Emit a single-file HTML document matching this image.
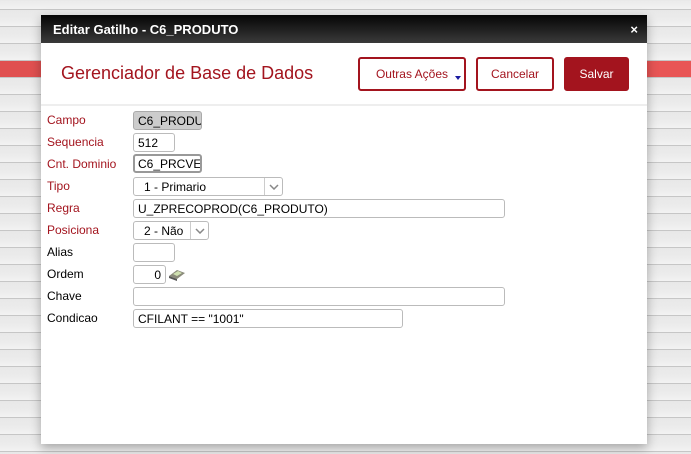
<!DOCTYPE html><html><head><style>
*{box-sizing:border-box;margin:0;padding:0}
body{width:691px;height:454px;overflow:hidden;position:relative;font-family:"Liberation Sans",sans-serif;
background:repeating-linear-gradient(180deg,#ebebeb 0,#f2f2f2 8px,#c6c6c6 8px,#c6c6c6 9px,#e8e8e8 9px,#ebebeb 17px);background-position:0 1px}
.red{position:absolute;left:0;right:0;top:61px;height:16px;background:linear-gradient(90deg,#e05050,#e85555)}
.modal{position:absolute;left:41px;top:15px;width:606px;height:429px;background:#fff;box-shadow:0 4px 10px rgba(0,0,0,.3)}
.hd{height:28px;background:linear-gradient(#050505,#3a3a3a);color:#fff;font-weight:bold;font-size:13px;padding:7px 0 0 12px}
.x{position:absolute;right:9px;top:7px;font-size:13px;color:#fff;font-weight:bold}
.title{position:absolute;left:20px;top:48px;font-size:18px;color:#a3141e}
.btn{position:absolute;top:42px;height:34px;border:2px solid #a3141e;border-radius:3px;color:#a3141e;font-size:12px;text-align:center;line-height:30px;background:#fff}
.sep{position:absolute;left:0;right:0;top:89px;height:2px;background:#eee}
.l{position:absolute;left:6px;font-size:12px}
.r{color:#a3141e}
.i{position:absolute;left:92px;height:19px;border:1px solid #bbb;border-radius:3px;font-size:12px;padding:2px 4px;overflow:hidden;white-space:nowrap;background:#fff}
.ar{position:absolute;top:0;right:0;width:18px;height:100%;border-left:1px solid #ccc}
.ar svg{position:absolute;left:4px;top:6px}
</style></head><body>
<div class="red"></div>
<div class="modal">
<div class="hd">Editar Gatilho - C6_PRODUTO</div><div class="x">×</div>
<div class="title">Gerenciador de Base de Dados</div>
<div class="btn" style="left:317px;width:108px">Outras Ações<span style="position:absolute;right:3px;top:17px;width:0;height:0;border-left:3px solid transparent;border-right:3px solid transparent;border-top:4px solid #1a1aa0"></span></div>
<div class="btn" style="left:435px;width:78px">Cancelar</div>
<div class="btn" style="left:523px;width:65px;background:#a3141e;color:#fff">Salvar</div>
<div class="sep"></div>
<div class="l r" style="top:98px">Campo</div><div class="i" style="top:96px;width:69px;background:#ccc;border-color:#aaa">C6_PRODUTO</div>
<div class="l r" style="top:120px">Sequencia</div><div class="i" style="top:118px;width:42px">512</div>
<div class="l r" style="top:142px">Cnt. Dominio</div><div class="i" style="top:139px;width:69px;border:2px solid #999;padding:1px 3px">C6_PRCVEN</div>
<div class="l r" style="top:164px">Tipo</div><div class="i" style="top:162px;width:150px;padding-left:10px">1 - Primario<div class="ar"><svg width="10" height="6"><path d="M1 1 L5 5 L9 1" fill="none" stroke="#888" stroke-width="1.5"/></svg></div></div>
<div class="l r" style="top:186px">Regra</div><div class="i" style="top:184px;width:372px">U_ZPRECOPROD(C6_PRODUTO)</div>
<div class="l r" style="top:208px">Posiciona</div><div class="i" style="top:206px;width:76px;padding-left:10px">2 - Não<div class="ar"><svg width="10" height="6"><path d="M1 1 L5 5 L9 1" fill="none" stroke="#888" stroke-width="1.5"/></svg></div></div>
<div class="l" style="top:230px">Alias</div><div class="i" style="top:228px;width:42px"></div>
<div class="l" style="top:252px">Ordem</div><div class="i" style="top:250px;width:33px;text-align:right">0</div>
<svg style="position:absolute;left:127px;top:253px" width="18" height="13"><path d="M1 8 L9 2 L17 5 L9 11Z" fill="#8a8a7a"/><path d="M1 8 L9 11 L9 13 L1 10Z" fill="#555"/><path d="M5 6 L10 3 L14 5 L9 8Z" fill="#cfe0b0"/></svg>
<div class="l" style="top:274px">Chave</div><div class="i" style="top:272px;width:372px"></div>
<div class="l" style="top:296px">Condicao</div><div class="i" style="top:294px;width:270px">CFILANT == "1001"</div>
</div>
</body></html>
